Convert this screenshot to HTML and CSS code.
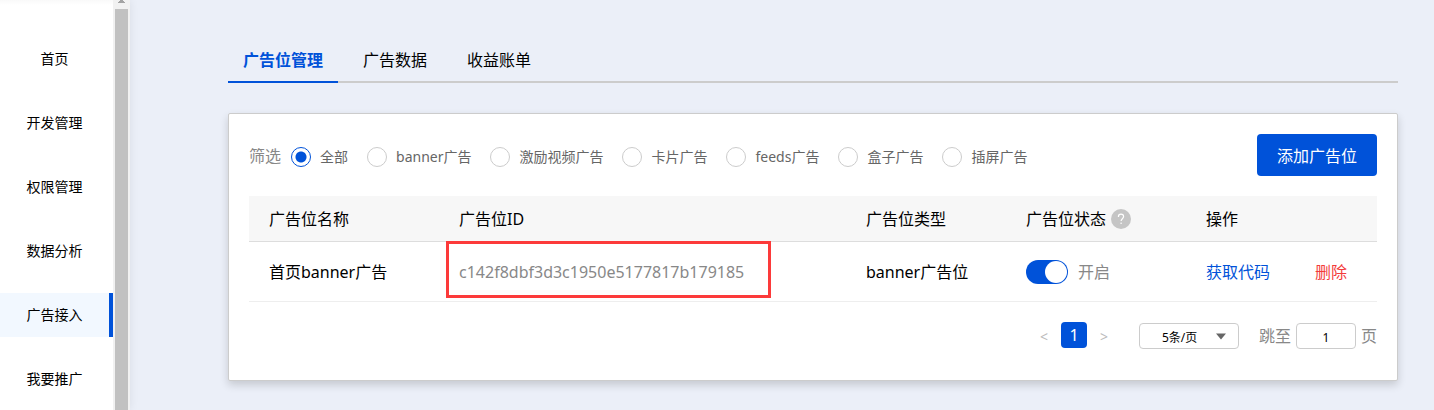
FILE: index.html
```html
<!DOCTYPE html>
<html lang="zh-CN">
  <head>
    <meta charset="utf-8" />
    <meta name="viewport" content="width=device-width, initial-scale=1" />
    <title>广告位管理</title>
    <link rel="stylesheet" href="styles.css">
  </head>
  <body>
    <div class="page">
      <nav class="sidebar">
        <a href="#" class="nav-item">首页</a>
        <a href="#" class="nav-item">开发管理</a>
        <a href="#" class="nav-item">权限管理</a>
        <a href="#" class="nav-item">数据分析</a>
        <a href="#" class="nav-item active">广告接入</a>
        <a href="#" class="nav-item">我要推广</a>
      </nav>
      <div class="scrollbar">
        <svg class="scroll-arrow" width="7" height="3" viewBox="0 0 7 3">
          <path d="M2 0h3v1h1v1h1v1H0V2h1V1h1z" fill="#a3a3a3" />
        </svg>
        <div class="scroll-thumb"></div>
      </div>

      <main>
        <div class="tabs">
          <a href="#" class="tab active">广告位管理</a>
          <a href="#" class="tab">广告数据</a>
          <a href="#" class="tab">收益账单</a>
        </div>

        <section class="card">
          <div class="toolbar">
            <div class="filters">
              <span class="filter-title">筛选</span>
              <label class="radio"><input type="radio" name="type" checked />全部</label>
              <label class="radio"><input type="radio" name="type" />banner广告</label>
              <label class="radio"><input type="radio" name="type" />激励视频广告</label>
              <label class="radio"><input type="radio" name="type" />卡片广告</label>
              <label class="radio"><input type="radio" name="type" />feeds广告</label>
              <label class="radio"><input type="radio" name="type" />盒子广告</label>
              <label class="radio"><input type="radio" name="type" />插屏广告</label>
            </div>
            <button class="add-button">添加广告位</button>
          </div>

          <table class="ad-table">
            <colgroup>
              <col class="col-name" />
              <col />
              <col class="col-type" />
              <col class="col-status" />
              <col class="col-action" />
            </colgroup>
            <thead>
              <tr>
                <th>广告位名称</th>
                <th>广告位ID</th>
                <th>广告位类型</th>
                <th>
                  <div class="status-title">
                    广告位状态
                    <svg width="20" height="20" viewBox="0 0 20 20">
                      <circle cx="10" cy="10" r="10" fill="#c5c5c5" />
                      <path d="M7.4 7.9c0-1.7 1-2.7 2.6-2.7s2.6 1 2.6 2.4c0 2-2.5 2.2-2.5 4.4" fill="none" stroke="#fff" stroke-width="1.2" />
                      <circle cx="10.1" cy="14.3" r="0.8" fill="#fff" />
                    </svg>
                  </div>
                </th>
                <th>操作</th>
              </tr>
            </thead>
            <tbody>
              <tr>
                <td>首页banner广告</td>
                <td class="ad-id">c142f8dbf3d3c1950e5177817b179185<span class="highlight"></span></td>
                <td>banner广告位</td>
                <td>
                  <label class="switch"><input type="checkbox" checked />开启</label>
                </td>
                <td>
                  <div class="actions">
                    <a href="#" class="get-code">获取代码</a>
                    <a href="#" class="delete">删除</a>
                  </div>
                </td>
              </tr>
            </tbody>
          </table>

          <div class="pagination">
            <div class="pages">
              <button class="arrow">&lt;</button>
              <button class="current">1</button>
              <button class="arrow">&gt;</button>
            </div>
            <div class="page-size">
              <select aria-label="每页条数">
                <option>5条/页</option>
              </select>
              <svg class="caret" width="10" height="7" viewBox="0 0 10 7">
                <path d="M0 0.500h10L5 6.500z" fill="#666" />
              </svg>
            </div>
            <label class="jump">跳至<input type="text" value="1" />页</label>
          </div>
        </section>
      </main>
    </div>
  </body>
</html>
```
FILE: styles.css
```css
* {
  box-sizing: border-box;
}

body {
  margin: 0;
  background: #ebeff8;
  color: #000;
  font-family: "Noto Sans", "Noto Sans CJK SC", sans-serif;
  font-size: 16px;
  line-height: 24px;
}

a {
  color: inherit;
  text-decoration: none;
}

button,
input,
select {
  margin: 0;
  font-family: inherit;
}

.page {
  display: flex;
  min-height: 100vh;
}

.sidebar {
  position: relative;
  z-index: 1;
  display: flex;
  flex-direction: column;
  gap: 20px;
  width: 113px;
  padding-top: 37px;
  background: linear-gradient(#f9f9f9, #fff 5px);
}

.nav-item {
  border-right: 4px solid transparent;
  font-size: 14px;
  line-height: 44px;
  text-align: center;
}

.nav-item.active {
  border-color: #0052d9;
  background: #f2f8ff;
}

.scrollbar {
  display: flex;
  flex-direction: column;
  width: 17px;
  padding: 0 2px;
  background: #f1f1f1;
  box-shadow: 0 0 10px rgba(0, 0, 0, 0.08);
}

.scroll-arrow {
  align-self: center;
  margin-bottom: 6px;
}

.scroll-thumb {
  flex: 1;
  background: #c1c1c1;
}

main {
  flex: 1;
  padding: 39px 36px 29px 98px;
}

.tabs {
  display: flex;
  gap: 10px;
  margin-bottom: 30px;
  box-shadow: inset 0 -2px #ccc;
}

.tab {
  padding: 0 15px;
  border-bottom: 2px solid transparent;
  line-height: 42px;
}

.tab.active {
  border-color: #0052d9;
  color: #0052d9;
  font-weight: bold;
}

.card {
  padding: 20px 20px 30px;
  border: 1px solid #ccc;
  border-radius: 2px;
  background: #fff;
  box-shadow: 0 4px 8px rgba(0, 0, 0, 0.16);
}

.toolbar {
  display: flex;
  justify-content: space-between;
  margin-bottom: 20px;
}

.filters {
  display: flex;
  align-items: center;
  gap: 19px;
  padding-top: 4px;
}

.filter-title {
  margin-right: -9px;
  padding-bottom: 2px;
  color: #888;
}

.radio {
  display: flex;
  align-items: center;
  gap: 9px;
  color: #666;
  font-size: 14px;
}

.radio input {
  appearance: none;
  width: 20px;
  height: 20px;
  border: 1px solid #ccc;
  border-radius: 50%;
  background: #fff;
}

.radio input:checked {
  border-color: #0052d9;
  background: radial-gradient(circle, #0052d9 5px, #fff 6px);
}

.add-button {
  width: 120px;
  height: 42px;
  padding: 0;
  border: 0;
  border-radius: 4px;
  background: #0052d9;
  color: #fff;
  font-size: 16px;
}

.ad-table {
  width: 100%;
  border-collapse: separate;
  border-spacing: 0;
  table-layout: fixed;
}

.col-name {
  width: 190px;
}

.col-type {
  width: 160px;
}

.col-status {
  width: 180px;
}

.col-action {
  width: 191px;
}

.ad-table th {
  height: 46px;
  padding: 0 0 0 20px;
  border-bottom: 1px solid #ddd;
  background: #f7f7f7;
  font-weight: normal;
  text-align: left;
}

.ad-table td {
  height: 60px;
  padding: 0 0 0 20px;
  border-bottom: 1px solid #eee;
}

.status-title {
  display: flex;
  align-items: center;
  gap: 5px;
}

.ad-table .ad-id {
  position: relative;
  color: #888;
}

/* red frame over the id cell */
.highlight {
  position: absolute;
  top: -1px;
  left: 7px;
  width: 325px;
  height: 57px;
  border: 3px solid #fc3a3a;
}

.switch {
  display: flex;
  align-items: center;
  gap: 10px;
  color: #888;
}

.switch input {
  appearance: none;
  width: 42px;
  height: 24px;
  border-radius: 12px;
  background: #0052d9;
}

.switch input::before {
  content: "";
  display: block;
  width: 22px;
  height: 22px;
  margin: 1px 1px 1px 19px;
  border-radius: 50%;
  background: #fff;
}

.actions {
  display: flex;
  gap: 45px;
}

.get-code {
  color: #0052d9;
}

.delete {
  color: #f33b3b;
}

.pagination {
  display: flex;
  align-items: center;
  justify-content: flex-end;
  gap: 20px;
  padding-top: 20px;
}

.pages {
  display: flex;
  gap: 7px;
  margin-right: 5px;
  padding-bottom: 2px;
}

.pages button {
  width: 26px;
  height: 26px;
  padding: 0;
  border: 0;
  border-radius: 4px;
  background: none;
  font-size: 16px;
  line-height: 26px;
}

.pages .arrow {
  width: 20px;
  padding-top: 2px;
  color: #bbb;
  font-size: 14px;
}

.pages .current {
  background: #0052d9;
  color: #fff;
}

.page-size {
  position: relative;
}

.page-size select {
  appearance: none;
  display: block;
  width: 100px;
  height: 26px;
  padding: 2px 22px 0;
  border: 1px solid #ccc;
  border-radius: 4px;
  background: #fff;
  color: #000;
  font-size: 12px;
}

.caret {
  position: absolute;
  top: 10px;
  right: 13px;
  pointer-events: none;
}

.jump {
  display: flex;
  align-items: center;
  gap: 5px;
  color: #888;
}

.jump input {
  width: 60px;
  height: 26px;
  padding: 2px 0 0;
  border: 1px solid #ccc;
  border-radius: 4px;
  background: #fff;
  color: #000;
  font-size: 12px;
  text-align: center;
}
```
